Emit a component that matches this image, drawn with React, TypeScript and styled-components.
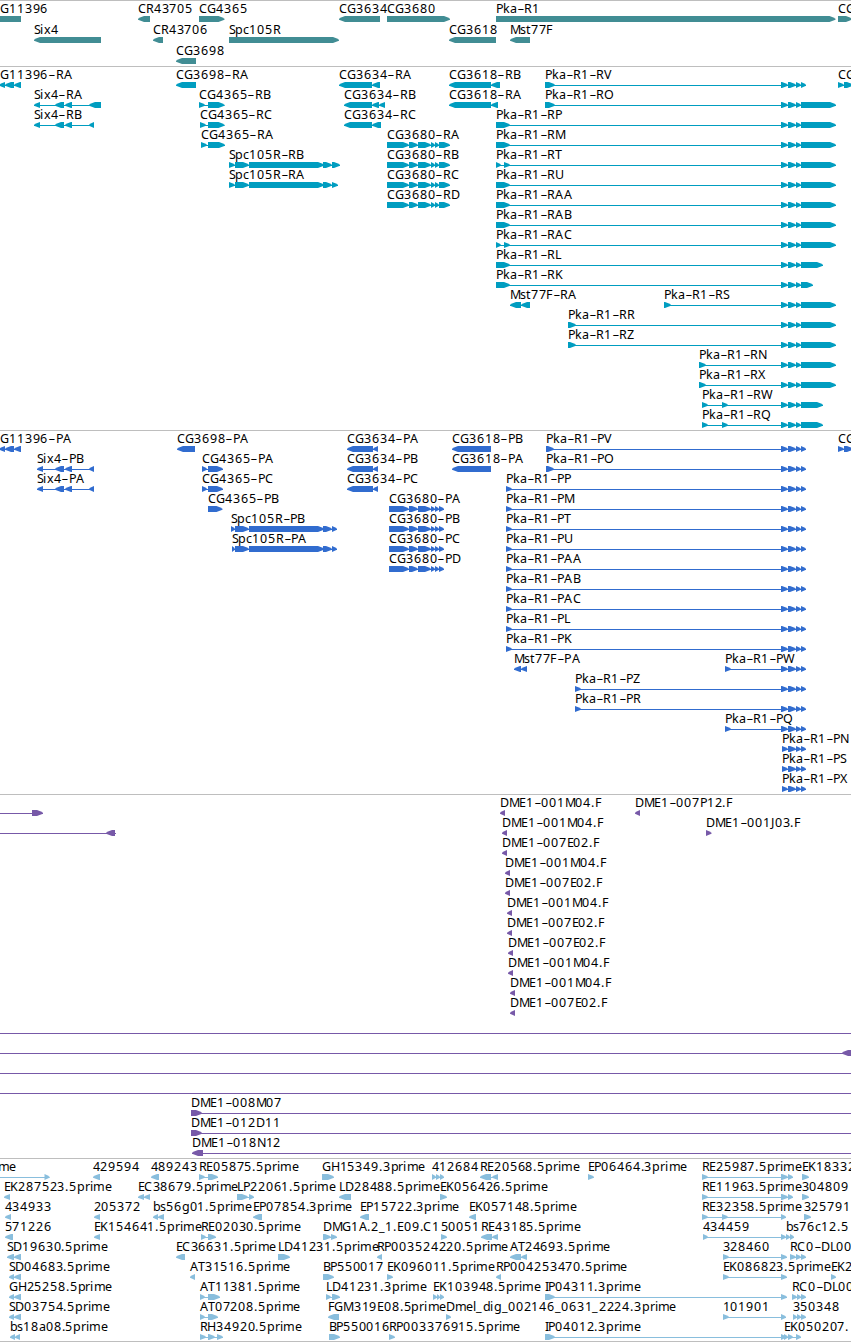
import styled, { createGlobalStyle } from "styled-components";

type Strand = "+" | "-";
type Exon = [number, number];

interface FeatureData {
  name: string;
  strand: Strand;
  exons: Exon[];
  line?: Exon;
}

const f = (
  name: string,
  strand: Strand,
  exons: Exon[],
  line?: Exon
): FeatureData => ({ name, strand, exons, line });

// advance of each character in the label font
const ADVANCE: Record<string, number> = {
  A: 8.4, B: 7.2, C: 8.4, D: 9, E: 6.7, F: 6.5, G: 9.1, H: 8.9, I: 3.6,
  J: 4, K: 8, L: 6.4, M: 10.6, N: 8.9, O: 9.3, P: 7.1, Q: 9.3, R: 7.8,
  S: 6.6, T: 6.8, U: 8.1, V: 7.8, W: 11, X: 7.6, Z: 7.2,
  a: 6.9, b: 7.7, c: 6.3, d: 7.8, e: 7, g: 7.7, i: 3.5, k: 7.2, l: 3.5,
  m: 11.4, p: 7.8, r: 4.9, s: 6, t: 4.6, x: 6.9,
  "-": 7.5, ".": 3.9, _: 6.2,
};

const letterPositions = (text: string) => {
  let x = -0.5;
  return text.split("").map((char) => {
    const at = Math.round(x) + (char === "-" ? 0.7 : 0);
    x += ADVANCE[char] ?? 7.85;
    return at;
  });
};

// exons shared by the Pka-R1 isoforms
const pkaTail = (end: number): Exon[] => [
  [781, 788],
  [788, 796],
  [796, 801],
  [801, end],
];
const pka = (suffix: string, head: Exon[], end = 836) =>
  f(`Pka-R1-${suffix}`, "+", [...head, ...pkaTail(end)]);
const pkaP = (suffix: string, start = 506) =>
  f(`Pka-R1-${suffix}`, "+", [[start, start + 6], ...pkaTail(806)]);

const cg3680 = (suffix: string, start = 387, end = 450) =>
  f(`CG3680-${suffix}`, "+", [
    [start, 409],
    [409, 418],
    [418, 431],
    [431, 435],
    [435, 439],
    [439, end],
  ]);
const cg11396 = (suffix: string) =>
  f(`CG11396-${suffix}`, "-", [[-8, -2], [-1, 5], [5, 14], [14, 21]]);
const six4 = (suffix: string, start: number, end = 94) =>
  f(`Six4-${suffix}`, "-", [[start, start + 6], [55, 64], [65, 72], [89, end]]);
const spc = (suffix: string, start: number, end: number) =>
  f(`Spc105R-${suffix}`, "+", [
    [start, 235],
    [235, 249],
    [249, 324],
    [323, 332],
    [332, end],
  ]);
const dme = (id: string, start: number) =>
  f(`DME1-${id}.F`, "-", [[start, start + 5]]);
const span = () => f("", "+", [], [-20, 870]);

const genes: FeatureData[][] = [
  [
    f("CG11396", "-", [[-8, 21]]),
    f("CR43705", "-", [[138, 150]]),
    f("CG4365", "+", [[199, 224.5]]),
    f("CG3634", "-", [[339, 380]]),
    f("CG3680", "+", [[387, 450]]),
    f("Pka-R1", "+", [[496, 835.5]]),
    f("CG", "+", [[838, 852]]),
  ],
  [
    f("Six4", "-", [[34, 101]]),
    f("CR43706", "-", [[153, 163]]),
    f("Spc105R", "+", [[229, 339]]),
    f("CG3618", "-", [[449, 496]]),
    f("Mst77F", "-", [[510, 530]]),
  ],
  [f("CG3698", "-", [[176, 196]])],
];

const transcripts: FeatureData[][] = [
  [
    cg11396("RA"),
    f("CG3698-RA", "-", [[176, 196]]),
    f("CG3634-RA", "-", [[339, 372], [372, 380]]),
    f("CG3618-RB", "-", [[449, 491], [491, 500]]),
    pka("RV", [[545, 555]], 806),
    f("CG", "+", [[838, 844], [844, 853]]),
  ],
  [
    six4("RA", 34, 101),
    f("CG4365-RB", "+", [[199, 205], [208, 224.5]]),
    f("CG3634-RB", "-", [[344, 372], [372, 379], [379, 385]]),
    f("CG3618-RA", "-", [[449, 491], [491, 498]]),
    pka("RO", [[545, 555]]),
  ],
  [
    six4("RB", 34),
    f("CG4365-RC", "+", [[200, 206], [208, 224.5]]),
    f("CG3634-RC", "-", [[344, 372], [372, 381]]),
    pka("RP", [[496, 510]]),
  ],
  [
    f("CG4365-RA", "+", [[201, 207], [208, 225]]),
    cg3680("RA"),
    pka("RM", [[496, 510]]),
  ],
  [
    spc("RB", 229, 340),
    cg3680("RB"),
    pka("RT", [[496, 501], [504, 510]]),
  ],
  [spc("RA", 229, 338), cg3680("RC"), pka("RU", [[496, 510]])],
  [cg3680("RD"), pka("RAA", [[496, 510]])],
  [pka("RAB", [[496, 510]])],
  [pka("RAC", [[496, 501], [504, 510]])],
  [pka("RL", [[496, 510]], 823)],
  [pka("RK", [[496, 510]], 813)],
  [f("Mst77F-RA", "-", [[510, 521], [521, 530]]), pka("RS", [[664, 671]])],
  [pka("RR", [[568, 576]])],
  [pka("RZ", [[568, 576]])],
  [pka("RN", [[699, 706]])],
  [pka("RX", [[699, 706]])],
  [pka("RW", [[702, 708], [722, 728]], 823)],
  [pka("RQ", [[702, 708], [722, 728]], 823)],
];

const proteins: FeatureData[][] = [
  [
    cg11396("PA"),
    f("CG3698-PA", "-", [[177, 195]]),
    f("CG3634-PA", "-", [[347, 373], [373, 378]]),
    f("CG3618-PB", "-", [[452, 491]]),
    pka("PV", [[546, 554]], 806),
    f("CG", "+", [[838, 844], [844, 853]]),
  ],
  [
    six4("PB", 37),
    f("CG4365-PA", "+", [[202, 207], [208, 223]]),
    f("CG3634-PB", "-", [[347, 373], [373, 378]]),
    f("CG3618-PA", "-", [[452, 491]]),
    pka("PO", [[546, 554]], 806),
  ],
  [
    six4("PA", 37),
    f("CG4365-PC", "+", [[202, 207], [208, 223]]),
    f("CG3634-PC", "-", [[347, 373], [373, 378]]),
    pkaP("PP"),
  ],
  [f("CG4365-PB", "+", [[208, 222.5]]), cg3680("PA", 389, 444), pkaP("PM")],
  [spc("PB", 231, 337), cg3680("PB", 389, 444), pkaP("PT")],
  [spc("PA", 232, 337), cg3680("PC", 389, 444), pkaP("PU")],
  [cg3680("PD", 389, 444), pkaP("PAA")],
  [pkaP("PAB")],
  [pkaP("PAC")],
  [pkaP("PL")],
  [pkaP("PK")],
  [f("Mst77F-PA", "-", [[514, 521], [521, 527]]), pkaP("PW", 725)],
  [pkaP("PZ", 575)],
  [pkaP("PR", 575)],
  [pkaP("PQ", 725)],
  [f("Pka-R1-PN", "+", [[782, 788], ...pkaTail(806).slice(1)])],
  [f("Pka-R1-PS", "+", [[782, 788], ...pkaTail(806).slice(1)])],
  [f("Pka-R1-PX", "+", [[782, 788], ...pkaTail(806).slice(1)])],
];

const clones: FeatureData[][] = [
  [
    f("", "+", [[32, 43]], [-20, 43]),
    dme("001M04", 500),
    dme("007P12", 635),
  ],
  [
    f("", "-", [[106, 115]], [-20, 116]),
    dme("001M04", 502),
    f("DME1-001J03.F", "+", [[706, 711.5]]),
  ],
  [dme("007E02", 502)],
  [dme("001M04", 505)],
  [dme("007E02", 505)],
  [dme("001M04", 507)],
  [dme("007E02", 507)],
  [dme("007E02", 508)],
  [dme("001M04", 508)],
  [dme("001M04", 510)],
  [dme("007E02", 510)],
  [span()],
  [f("", "-", [[842, 853]], [-20, 853])],
  [span()],
  [span()],
  [f("DME1-008M07", "+", [[191, 202]], [191, 870])],
  [f("DME1-012D11", "+", [[191, 202]], [191, 870])],
  [f("DME1-018N12", "-", [[192, 203]], [192, 870])],
];

const ests: FeatureData[][] = [
  [
    f("prime", "+", [[-18.5, -12], [44, 49]]),
    f("429594", "-", [[93, 100]]),
    f("489243", "-", [[151, 159]]),
    f("RE05875.5prime", "+", [[199, 205], [208, 218]]),
    f("GH15349.3prime", "+", [[322, 334]]),
    f("412684", "+", [[432, 436], [436, 440], [440, 444]]),
    f("RE20568.5prime", "-", [[480, 491], [492, 498]]),
    f("EP06464.3prime", "+", [[588, 594]]),
    f("RE25987.5prime", "+", [[702, 708], [781, 788], [788, 793]]),
    f("EK18332", "+", [[802, 809]]),
  ],
  [
    f("EK287523.5prime", "-", [[4, 10]]),
    f("EC38679.5prime", "-", [[138, 144], [144, 150]]),
    f("LP22061.5prime", "+", [[237, 248], [249, 254]]),
    f("LD28488.5prime", "-", [[339, 351]]),
    f("EK056426.5prime", "+", [[440, 447]]),
    f("RE11963.5prime", "+", [[702, 708], [781, 788], [788, 793]]),
    f("304809", "+", [[802, 809]]),
  ],
  [
    f("434933", "-", [[5, 11]]),
    f("205372", "-", [[94, 100]]),
    f("bs56g01.5prime", "-", [[153, 158], [158, 164]]),
    f("EP07854.3prime", "-", [[253, 262]]),
    f("EP15722.3prime", "-", [[360, 369]]),
    f("EK057148.5prime", "-", [[469, 476]]),
    f("RE32358.5prime", "+", [[702, 708], [722, 728], [781, 786]]),
    f("325791", "+", [[804, 811]]),
  ],
  [
    f("571226", "-", [[5, 13]]),
    f("EK154641.5prime", "-", [[94, 100]]),
    f("RE02030.5prime", "+", [[201, 206], [208, 216]]),
    f("DMG1A.2_1.E09.C1", "+", [[323, 331], [331, 337]]),
    f("50051", "+", [[441, 447]]),
    f("RE43185.5prime", "-", [[481, 492], [492, 498]]),
    f("434459", "+", [[703, 708], [781, 786]]),
    f("bs76c12.5", "+", [[786, 790], [790, 794]]),
  ],
  [
    f("SD19630.5prime", "-", [[7, 14], [14, 21]]),
    f("EC36631.5prime", "-", [[176, 185]]),
    f("LD41231.5prime", "+", [[278, 290]]),
    f("RP003524220.5prime", "-", [[377, 382]]),
    f("AT24693.5prime", "-", [[510, 521], [521, 527]]),
    f("328460", "+", [[723, 729], [781, 787]]),
    f("RC0-DL00", "+", [[790, 796], [796, 801], [801, 806]]),
  ],
  [
    f("SD04683.5prime", "-", [[9, 14], [14, 21]]),
    f("AT31516.5prime", "-", [[190, 195]]),
    f("BP550017", "+", [[323, 334]]),
    f("EK096011.5prime", "+", [[387, 393]]),
    f("RP004253470.5prime", "-", [[496, 501]]),
    f("EK086823.5prime", "+", [[723, 729], [781, 787]]),
    f("EK2", "+", [[831, 836]]),
  ],
  [
    f("GH25258.5prime", "-", [[9, 14], [14, 21]]),
    f("AT11381.5prime", "+", [[200, 205], [208, 220]]),
    f("LD41231.3prime", "+", [[326, 331], [332, 340]]),
    f("EK103948.5prime", "+", [[433, 437], [437, 440], [440, 444]]),
    f("IP04311.3prime", "+", [[545, 555], [781, 787]]),
    f("RC0-DL00", "+", [[792, 797], [797, 801], [801, 806]]),
  ],
  [
    f("SD03754.5prime", "-", [[9, 14], [14, 21]]),
    f("AT07208.5prime", "+", [[200, 205], [208, 218]]),
    f("FGM319E08.5prime", "-", [[328, 339]]),
    f("Dmel_dig_002146_0631_2224.3prime", "+", [[446, 451]]),
    f("101901", "+", [[723, 729], [781, 786]]),
    f("350348", "+", [[793, 797], [797, 801], [801, 806]]),
  ],
  [
    f("bs18a08.5prime", "-", [[10, 15], [15, 20]]),
    f("RH34920.5prime", "+", [[200, 206], [208, 215], [217, 223]]),
    f("BP550016", "+", [[329, 340]]),
    f("RP003376915.5prime", "+", [[389, 395]]),
    f("IP04012.3prime", "+", [[545, 555], [781, 786]]),
    f("EK050207.", "+", [[784, 788], [788, 793], [796, 801]]),
  ],
];

const tracks = [
  { id: "genes", color: "#418d94", rowHeight: 21, gap: 2, rows: genes },
  { id: "transcripts", color: "#009dc0", rowHeight: 20, gap: 3, rows: transcripts },
  { id: "proteins", color: "#316ccf", rowHeight: 20, gap: 3, rows: proteins },
  { id: "clones", color: "#7759a8", rowHeight: 20, gap: 3, rows: clones },
  { id: "ests", color: "#89bedd", rowHeight: 20, gap: 2, rows: ests },
];

const arrow = (from: number, to: number, strand: Strand) => {
  const tip = Math.min(6, to - from);
  const dir = strand === "+" ? 1 : -1;
  const head = strand === "+" ? to : from;
  const tail = strand === "+" ? from : to;
  const neck = head - dir * tip;
  const bend = head - dir * tip * 0.45;
  return `M${tail} 0H${neck}L${bend} 1.2L${head} 2.7V3.7L${bend} 4.8L${neck} 6H${tail}Z`;
};

const Feature = ({ feature }: { feature: FeatureData }) => {
  const { name, strand, exons, line } = feature;
  const start = line ? line[0] : exons[0][0];
  const end = line ? line[1] : exons[exons.length - 1][1];
  const width = end - start;
  return (
    <FeatureGlyph style={{ marginLeft: start }} width={width} height={21}>
      {name && (
        <FeatureName x={letterPositions(name).join(" ")} y={12}>
          {name.replace(/-/g, "–")}
        </FeatureName>
      )}
      <g transform="translate(0 15)">
        {(line || exons.length > 1) && (
          <rect x={0} y={3} width={width} height={1} />
        )}
        {exons.map(([from, to]) => (
          <path key={from} d={arrow(from - start, to - start, strand)} />
        ))}
      </g>
    </FeatureGlyph>
  );
};

const App = () => {
  return (
    <>
      <GlobalStyle />
      <Browser>
        {tracks.map((track) => (
          <Track key={track.id} $color={track.color} $gap={track.gap}>
            {track.rows.map((row, i) => (
              <Row key={i} $height={track.rowHeight}>
                {row.map((feature, j) => (
                  <Feature key={j} feature={feature} />
                ))}
              </Row>
            ))}
          </Track>
        ))}
      </Browser>
    </>
  );
};

export default App;

const GlobalStyle = createGlobalStyle`
  body {
    margin: 0;
    background: #fff;
  }
`;
const Browser = styled.main`
  width: 851px;
  overflow: hidden;
  border-bottom: 1px solid #bebebe;
`;
const Track = styled.section<{ $color: string; $gap: number }>`
  border-top: 1px solid #bebebe;
  padding-bottom: ${({ $gap }) => $gap}px;
  fill: ${({ $color }) => $color};
`;
const Row = styled.div<{ $height: number }>`
  display: grid;
  grid-template-columns: 851px;
  height: ${({ $height }) => $height}px;
`;
const FeatureGlyph = styled.svg`
  grid-area: 1 / 1;
  display: block;
  overflow: visible;
`;
const FeatureName = styled.text`
  fill: #000;
  font-family: "Noto Sans", "Open Sans", sans-serif;
  font-size: 12.5px;
`;
